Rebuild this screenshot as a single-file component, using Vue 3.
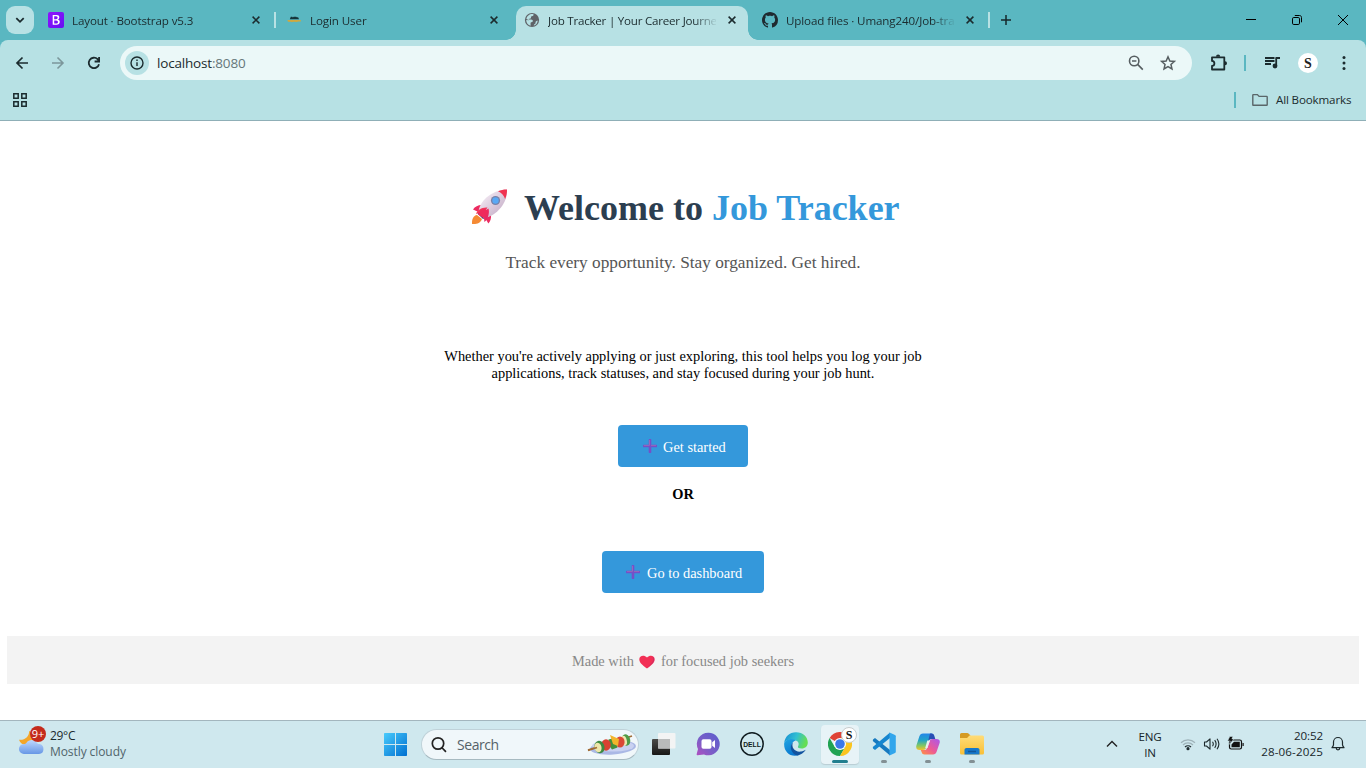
<script setup>
const tabs = [
  { title: 'Layout · Bootstrap v5.3', icon: 'bootstrap', ls: '-0.13px' },
  { title: 'Login User', icon: 'login', ls: '-0.1px' },
  { title: 'Job Tracker | Your Career Journe', icon: 'globe', active: true, ls: '-0.23px' },
  { title: 'Upload files · Umang240/Job-tra', icon: 'github', ls: '-0.12px' },
]
</script>

<template>
  <div class="screen">
    <div class="strip">
      <button class="tab-search">
        <svg width="28" height="28" viewBox="0 0 28 28"><path d="M10.3 12.2 14 15.8l3.7-3.6" fill="none" stroke="#1b2b2e" stroke-width="1.8" /></svg>
      </button>
      <div class="tabs">
        <div v-for="(t, i) in tabs" :key="t.icon" class="tab" :class="{ active: t.active, ruled: i === 0 || i === 3 }">
          <div class="tab-body">
            <svg v-if="t.icon === 'bootstrap'" class="fav" viewBox="0 0 16 16">
              <defs><linearGradient id="bs" x1="0" y1="0" x2="1" y2="1"><stop offset="0" stop-color="#9013fe" /><stop offset="1" stop-color="#6610f2" /></linearGradient></defs>
              <rect width="16" height="16" rx="2" fill="url(#bs)" />
              <path d="M4.700 3h4c1.700 0 2.600.9 2.600 2.300 0 1.100-.6 1.900-1.600 2.200 1.300.1 2.100 1.100 2.100 2.300 0 1.900-1.300 3-3.300 3H4.700zM6.200 7.200H8c2.200 0 2.200-3 .1-3H6.200zm0 4.400h2c2.400 0 2.300-3.200 0-3.200h-2z" fill="#fff" fill-rule="evenodd" />
            </svg>
            <svg v-else-if="t.icon === 'login'" class="fav" viewBox="0 0 16 16">
              <path d="M3.800 7.300 4.800 4.800h1.500l.6.700.7-.7h2.600l.9.700.9-.5 1 2.300z" fill="#15343a" />
              <path d="M1.300 7.900h13.500v1.700h-3.200l-1 .7-1-.5H7l-1 .5-1-.5H2z" fill="#c3ac48" />
              <path d="M2.500 8.900h11" stroke="#e7a52e" stroke-width=".8" stroke-dasharray="1.5 .5" />
            </svg>
            <svg v-else-if="t.icon === 'globe'" class="fav" viewBox="0 0 16 16">
              <circle cx="8" cy="8" r="7.100" fill="#5f6368" />
              <path d="M9.500 2.200c.3 1.300-.5 1.900-1.700 2-.9.100-.9.800-.8 1.500.1.800-.9 1-1.800 1-.6 0-.6.7.2.800 1.400 0 3.100-.2 3.400 1.100.2 1-.3 1.600-1.500 1.700-1 .1-.7 1.300-.7 2.300v1.200C4 13.300 2.200 11 2.200 8l3 .2L2.400 7C2.900 3.800 6 1.600 9.500 2.200zM13.800 8.400c-.2 2.700-1.900 4.600-4.200 5.300.5-.8.6-1.600 1.500-2 .6-.3.500-1.200.4-1.700.6-.9 1.300-1.500 2.300-1.600z" fill="#b7e1e4" />
            </svg>
            <svg v-else class="fav" viewBox="0 0 16 16">
              <path fill="#1f2a30" d="M8 0C3.58 0 0 3.58 0 8c0 3.54 2.29 6.53 5.47 7.59.4.07.55-.17.55-.38 0-.19-.01-.82-.01-1.49-2.01.37-2.53-.49-2.69-.94-.09-.23-.48-.94-.82-1.13-.28-.15-.68-.52-.01-.53.63-.01 1.08.58 1.23.82.72 1.21 1.87.87 2.33.66.07-.52.28-.87.51-1.07-1.78-.2-3.64-.89-3.64-3.95 0-.87.31-1.59.82-2.15-.08-.2-.36-1.02.08-2.12 0 0 .67-.21 2.2.82.64-.18 1.32-.27 2-.27s1.36.09 2 .27c1.53-1.04 2.2-.82 2.2-.82.44 1.1.16 1.92.08 2.12.51.56.82 1.27.82 2.15 0 3.07-1.87 3.75-3.65 3.95.29.25.54.73.54 1.48 0 1.07-.01 1.93-.01 2.2 0 .21.15.46.55.38A8.01 8.01 0 0 0 16 8c0-4.42-3.58-8-8-8z" />
            </svg>
            <span class="tab-title" :style="{ letterSpacing: t.ls }">{{ t.title }}</span>
            <svg class="tab-close" viewBox="0 0 16 16"><path d="m4.600 4.600 6.800 6.800m0-6.800-6.800 6.800" stroke="#1b2b2e" stroke-width="1.500" /></svg>
          </div>
        </div>
      </div>
      <svg class="new-tab" width="32" height="40" viewBox="0 0 32 40"><path d="M11 20h10M16 15v10" stroke="#16282b" stroke-width="1.500" /></svg>
      <div class="controls">
        <svg viewBox="0 0 46 40"><path d="M18 19.5h10" stroke="#000" /></svg>
        <svg viewBox="0 0 46 40" fill="none" stroke="#000"><rect x="18.5" y="17.5" width="7" height="7" rx="1.3" /><path d="M20.8 15.5h4.700c1.200 0 2 .8 2 2v4.800" /></svg>
        <svg viewBox="0 0 46 40"><path d="m18 15 10 10m0-10L18 25" stroke="#000" stroke-width="1" /></svg>
      </div>
    </div>

    <div class="chrome">
      <div class="toolbar">
        <svg class="nav" viewBox="0 0 36 46" fill="none" stroke="#1b2b2e" stroke-width="1.7"><path d="M24 23H13m5.500-5.500L13 23l5.500 5.500" /></svg>
        <svg class="nav" viewBox="0 0 36 46" fill="none" stroke="#7c979b" stroke-width="1.6"><path d="M12 23h11m-5.500-5.500L23 23l-5.500 5.500" /></svg>
        <svg class="nav" viewBox="0 0 36 46" fill="none" stroke="#1b2b2e" stroke-width="1.8"><path d="M23 24.200a5.200 5.200 0 1 1-1.400-5l1.700 1.900M23.100 17v4.500h-4.500" /></svg>
        <div class="omnibox">
          <span class="info"><svg width="24" height="24" viewBox="0 0 24 24" fill="none" stroke="#1b2b2e" stroke-width="1.4"><circle cx="12" cy="12" r="6" /><path d="M12 11.200V15M12 8.600v1.400" /></svg></span>
          <span class="url">localhost<i>:8080</i></span>
          <svg class="omni-icon" viewBox="0 0 32 34" fill="none" stroke="#565e61" stroke-width="1.600"><circle cx="14.200" cy="15" r="4.700" /><path d="m17.600 18.400 5.200 5.200M12 15h4.400" /></svg>
          <svg class="omni-icon" viewBox="0 0 32 34" fill="none" stroke="#565e61" stroke-width="1.500"><path d="m16 10.800 1.850 4.150 4.550.45-3.430 3.020 1 4.480L16 20.600l-3.970 2.300 1-4.480-3.430-3.020 4.550-.45z" /></svg>
        </div>
        <svg class="ext" viewBox="0 0 52 46" fill="none" stroke="#1b2b2e" stroke-width="1.800" stroke-linejoin="round"><path d="M20 17.300h12.300v12.200H20v-3.600c3.200-.3 3.200-4.700 0-5z" /><path d="M24 16.700a2.100 2.100 0 0 1 4.200 0zM33 21.200a2 2 0 0 1 0 4z" fill="#1b2b2e" stroke="none" /></svg>
        <span class="rule"></span>
        <svg class="music" viewBox="0 0 44 46"><path d="M15 18h9.500M15 21h9.500M15 24h6M26.200 18v8M25.500 18h4.500" stroke="#1b2b2e" stroke-width="1.800" /><circle cx="25" cy="26" r="2.400" fill="#1b2b2e" /></svg>
        <span class="avatar">S</span>
        <svg class="dots" viewBox="0 0 36 46" fill="#1b2b2e"><circle cx="18" cy="17.500" r="1.500" /><circle cx="18" cy="23" r="1.500" /><circle cx="18" cy="28.500" r="1.500" /></svg>
      </div>
      <div class="bookmarks">
        <svg width="16" height="16" viewBox="0 0 16 16" fill="none" stroke="#1b2b2e" stroke-width="1.500"><path d="M1.800 1.800h4.400v4.400H1.800zM9.800 1.800h4.400v4.400H9.800zM1.800 9.800h4.400v4.400H1.800zM9.800 9.800h4.400v4.400H9.800z" /></svg>
        <span class="rule bm-rule"></span>
        <svg width="16" height="16" viewBox="0 0 16 16" fill="none" stroke="#5a6669" stroke-width="1.400"><path d="M.8 3.200q0-.6.600-.6h4l1.700 1.800h7.500q.6 0 .6.600v7.700q0 .6-.6.600H1.400q-.6 0-.6-.6z" /></svg>
        <span class="bm-text">All Bookmarks</span>
      </div>
    </div>

    <main class="page">
      <h1>
        <svg class="rocket" viewBox="0 0 38 38">
          <defs>
            <linearGradient id="rk" x1="0" y1="0" x2="1" y2="1"><stop offset=".2" stop-color="#f1e7f1" /><stop offset=".8" stop-color="#c9b3cb" /></linearGradient>
            <linearGradient id="rf" x1="0" y1="0" x2="1" y2="1"><stop offset="0" stop-color="#fb3e55" /><stop offset="1" stop-color="#e02165" /></linearGradient>
          </defs>
          <path d="M7 27c-3.500.7-5.200 3.500-5 9 4.500.4 8.600-.8 10-5z" fill="#f58a34" />
          <path d="M12 17c-3.500-.2-7 1.500-9 4.500l6.500 3zM21 27c.4 3-.6 6.500-2.600 8.500L15 30z" fill="#ec2b60" />
          <path d="M7.500 25.500 13 31l2-1-6.700-6.500z" fill="#433d78" />
          <path d="M8.500 25C8.500 14 21 2 37 1.500 38 14 27 28 14 30z" fill="url(#rk)" />
          <path d="M28 3.200c3-1.200 6-1.800 9-1.700.1 3.200-.5 6.500-1.900 9.500-1-3.300-3.900-6.600-7.100-7.800z" fill="#f03250" />
          <path d="M17.500 19.500c-5.500-.5-10.500 2.500-11.500 6.500 3.500-1.800 8-1 9.500-3.500zM18.500 20.500c1.500 5-1 11-4 13.500-1.200-5-.3-9.500 2.200-12.500z" fill="url(#rf)" />
          <path d="M8 26.500q1-5 6-5.500l3.500 1.500q-.5 5-4 7.500z" fill="#ef2a5b" />
          <circle cx="25.500" cy="12.500" r="4.600" fill="#7780a8" /><circle cx="25.500" cy="12.500" r="3.200" fill="#59a8f5" />
        </svg><span class="hello">Welcome to <b>Job Tracker</b></span>
      </h1>
      <p class="sub">Track every opportunity. Stay organized. Get hired.</p>
      <p class="desc">Whether you're actively applying or just exploring, this tool helps you log your job<br />applications, track statuses, and stay focused during your job hunt.</p>
      <a class="btn start">
        <svg class="plus" viewBox="0 0 14 14"><path d="M7 1v12M1 7h12" stroke="#7550c8" stroke-width="2.600" stroke-linecap="round" /><path d="M6.500 1v5.400H1M13 6.400H8" stroke="#9a6cb8" fill="none" stroke-width=".9" /></svg>
        <span>Get started</span>
      </a>
      <strong class="or">OR</strong>
      <a class="btn dash">
        <svg class="plus" viewBox="0 0 14 14"><path d="M7 1v12M1 7h12" stroke="#7550c8" stroke-width="2.600" stroke-linecap="round" /><path d="M6.500 1v5.400H1M13 6.400H8" stroke="#9a6cb8" fill="none" stroke-width=".9" /></svg>
        <span>Go to dashboard</span>
      </a>
      <footer>
        <span>Made with</span>
        <svg class="heart" viewBox="0 0 16 14"><path d="M8 13.500C3 10 .3 7.500.3 4.300.3.700 5-.8 8 2.600 11-.8 15.700.7 15.700 4.300c0 3.200-2.700 5.700-7.700 9.200z" fill="#f22f55" /><path d="M13.500 2c2 3.500-1 7-5.500 10.300 5-3 7-5.300 7-8.100 0-1-.6-1.800-1.500-2.200z" fill="#ca2c67" /></svg>
        <span>for focused job seekers</span>
      </footer>
    </main>

    <div class="taskbar">
      <div class="weather">
        <svg width="32" height="34" viewBox="0 0 32 34">
          <defs><linearGradient id="cl" x1="0" y1="0" x2="0" y2="1"><stop offset="0" stop-color="#bed8ff" /><stop offset="1" stop-color="#6797e5" /></linearGradient></defs>
          <path d="M13 6c.7 5-4 9.500-10 8.800 1 3.500 4 5.200 8 5.200h8V9z" fill="#f4a62a" />
          <path d="M8 29a5 5 0 0 1-.2-10c1.500 0 2-.3 2.700-1.200 2-3.500 8-3.800 10.200-.3.800 1.200 1.400 1.500 2.600 1.600A5 5 0 0 1 23 29z" fill="url(#cl)" />
          <circle cx="22" cy="9" r="8" fill="#c42b1c" /><text x="22" y="13" text-anchor="middle" font-family="Open Sans, sans-serif" font-size="11" fill="#fff">9+</text>
        </svg>
        <div class="forecast"><span class="deg">29°C</span><span class="cloudy">Mostly cloudy</span></div>
      </div>
      <svg class="start-logo" viewBox="0 0 24 24"><defs><linearGradient id="wn" x1="0" y1="0" x2="1" y2="1"><stop offset="0" stop-color="#48cbfc" /><stop offset="1" stop-color="#006fd0" /></linearGradient></defs><path d="M.8 0H11v11H0V.8Q0 0 .8 0zM12 0h10.200q.8 0 .8.800V11H12zM0 12h11v11H.8q-.8 0-.8-.8zM12 12h11v10.200q0 .8-.8.800H12z" fill="url(#wn)" /></svg>
      <div class="search">
        <svg width="18" height="18" viewBox="0 0 18 18" fill="none" stroke="#222" stroke-width="1.700"><circle cx="8" cy="7.500" r="5.700" /><path d="m12.200 12 3.300 3.400" stroke-linecap="round" /></svg>
        <span>Search</span>
        <svg class="skewer" width="50" height="26" viewBox="0 0 50 26">
          <ellipse cx="26" cy="15.500" rx="23" ry="7" fill="#aab8e5" transform="rotate(-4 26 15.500)" /><ellipse cx="26" cy="14" rx="21" ry="5.600" fill="#c9d1f1" />
          <path d="m1 18 44-14" stroke="#a06b35" stroke-width="1.700" />
          <ellipse cx="39" cy="8" rx="4.200" ry="5.800" fill="#4e9b48" transform="rotate(-15 39 8)" /><ellipse cx="37" cy="8.700" rx="2.800" ry="4.900" fill="#ede7b1" transform="rotate(-15 37 8.700)" />
          <ellipse cx="33" cy="10" rx="4.600" ry="5.500" fill="#da4836" />
          <path d="m21.500 7.500 6-1.500 3 9.500-5.500 2q-4-4-3.500-10z" fill="#448f3c" />
          <path d="m23 3 9 4-1 7-5-2z" fill="#f2b52b" />
          <ellipse cx="19" cy="13" rx="4.800" ry="5.700" fill="#d84232" />
          <ellipse cx="12.500" cy="15" rx="5" ry="6.300" fill="#3d8a41" transform="rotate(-15 12.500 15)" /><ellipse cx="11" cy="15.500" rx="3.500" ry="4.800" fill="#eee6ab" transform="rotate(-15 11 15.500)" />
          <path d="m1 18.500 9-3" stroke="#a06b35" stroke-width="1.600" />
        </svg>
      </div>
      <div class="apps">
        <div class="app"><svg viewBox="0 0 24 24"><defs><linearGradient id="dk" x2="0" y2="1"><stop stop-color="#4b4b49" /><stop offset="1" stop-color="#171716" /></linearGradient></defs><rect x="0" y="7" width="18" height="16" rx="1" fill="url(#dk)" /><rect x="6" y="1" width="17.500" height="15.500" rx="1" fill="#f3f4f4" /><path d="M6 7h12v9.500H6z" fill="#b9bbbb" /></svg></div>
        <div class="app"><svg viewBox="0 0 24 24"><defs><linearGradient id="mt" x1="1" x2="0" y2="1"><stop stop-color="#5a5dcc" /><stop offset=".6" stop-color="#7b5ec8" /><stop offset="1" stop-color="#b14fc0" /></linearGradient></defs><path d="M12.500.700A11.300 11.300 0 1 1 8 22.400L1.500 23.200c-.7.100-1-.5-.8-1.100L2 17A11.300 11.300 0 0 1 12.500.700z" fill="url(#mt)" /><rect x="5.500" y="7.300" width="10" height="9.400" rx="1.800" fill="#fff" /><path d="m16.200 10.200 2.800-2.200v8l-2.800-2.200z" fill="#fff" /></svg></div>
        <div class="app"><svg viewBox="0 0 24 24" fill="none" stroke="#101c20"><circle cx="12" cy="12" r="11.200" stroke-width="1.500" /><text x="3.200" y="14.700" font-family="Liberation Sans, sans-serif" font-weight="700" font-size="7.600" fill="#101c20" stroke="none" textLength="17.600" lengthAdjust="spacingAndGlyphs">DELL</text></svg></div>
        <div class="app"><svg viewBox="0 0 24 24"><defs><linearGradient id="e1" x1="0" y1="0" x2="1" y2=".3"><stop stop-color="#158cd4" /><stop offset=".55" stop-color="#32bfd2" /><stop offset="1" stop-color="#66de54" /></linearGradient><linearGradient id="e2" x2=".5" y2="1"><stop stop-color="#20a5e2" /><stop offset="1" stop-color="#0876ce" /></linearGradient></defs><path d="M.200 11C.8 4.600 5.500.200 12 .200 19 .200 23.800 5 23.800 10.500c0 3.800-2.600 6-6.200 6-2.700 0-4.200-1-3.600-2 1.500-2.800.5-5.500-2.800-6.300C7 7 2 7.500.200 11z" fill="url(#e1)" /><path d="M.200 11C2 7 7 5.800 11.800 8.200 8 9.500 6.800 13 8.300 17c1.200 3.500 4.500 6 7 6-9 3-16-3.500-15.100-12z" fill="url(#e2)" /><path d="M9 10.500c-2.300 5 2.300 10 8 9 2-.3 3.600-1 4.800-1.700-1.700 3-5 5.300-8.500 5.800C7.500 22 4.500 14.500 9 10.500z" fill="#12539f" /></svg></div>
        <div class="app running"><svg viewBox="0 0 24 24" class="over"><path d="M12 12 1.600 6A12 12 0 0 1 22.400 6z" fill="#df4337" /><path d="M12 12 6.800 15 1.600 6A12 12 0 0 0 12 24l5.200-9z" fill="#21a353" /><path d="M12 6h10.400A12 12 0 0 1 12 24l5.200-9z" fill="#fbc51f" /><circle cx="12" cy="12" r="6" fill="#fff" /><circle cx="12" cy="12" r="4.800" fill="#3b78e7" /></svg><span class="profile">S</span><i class="dash-mark wide"></i></div>
        <div class="app"><svg viewBox="0 0 24 24"><path d="M1 7.600 3 6l15 12v5.500L.800 9z" fill="#1679bf" /><path d="M1 16.400 3 18 18 6V.500L.800 15z" fill="#1686cf" /><path d="m17.500.500 5.500 2.600q.8.400.8 1.200v15.400q0 .8-.8 1.200l-5.500 2.600z" fill="#32a6ec" /></svg><i class="dash-mark"></i></div>
        <div class="app"><svg viewBox="0 0 24 24"><defs><linearGradient id="c1" x2="0" y2="1"><stop stop-color="#2386e9" /><stop offset=".4" stop-color="#20a4c8" /><stop offset=".75" stop-color="#87c85e" /><stop offset="1" stop-color="#f6c12d" /></linearGradient><linearGradient id="c2" x1="1" x2="0" y2="1"><stop stop-color="#aa57ed" /><stop offset=".55" stop-color="#ed5a95" /><stop offset="1" stop-color="#ff953f" /></linearGradient></defs><path d="M7 1.500h9.500L13 7.500l-2.800 8c-.6 1.700-1.500 2.500-3.200 2.500H3.500C.8 18-.3 16 .4 13.500L3.300 4.500C4 2.500 5 1.500 7 1.500z" fill="url(#c1)" /><path d="M14 1.500h1.500c1.500 0 2.400.8 2.800 2.200L19.300 7H16c-2 0-2.800.7-3.400 2.400L11 14l2-8.500z" fill="#284eb4" /><path d="M17 22.500H8.500c-1.500 0-2.400-.8-2.800-2.200L4.700 18H8c2 0 2.800-.9 3.400-2.600l2.200-6c.6-1.700 1.500-2.400 3.200-2.400h3.700c2.700 0 3.800 1.500 3.100 4l-2.900 8.500c-.7 2-1.700 3-3.700 3z" fill="url(#c2)" /><path d="M11.300 8.500h2.600l-2.400 7.500H9.200z" fill="#e7f0ed" /></svg><i class="dash-mark"></i></div>
        <div class="app"><svg viewBox="0 0 24 24"><defs><linearGradient id="fd" x2="0" y2="1"><stop stop-color="#ffdc78" /><stop offset="1" stop-color="#f9bf36" /></linearGradient></defs><path d="M0 2.500Q0 1 1.500 1h5.800q.7 0 1.200.5L10.500 3.500l-3 3.500H0z" fill="#d59a23" /><path d="M0 6h7L9.500 3.500h13Q24 3.500 24 5v16q0 1.500-1.500 1.500h-21Q0 22.500 0 21z" fill="url(#fd)" /><path d="M4.500 22.500v-4.700Q4.500 16 6.500 16h11q2 0 2 1.800v4.700z" fill="#1778ca" /><path d="M8 19.500h8" stroke="#115799" stroke-width="1.500" /></svg><i class="dash-mark"></i></div>
      </div>
      <div class="tray">
        <svg class="chev" viewBox="0 0 16 16"><path d="m3 10.500 5-5 5 5" fill="none" stroke="#222" stroke-width="1.400" /></svg>
        <div class="lang"><span>ENG</span><span>IN</span></div>
        <svg class="wifi" viewBox="0 0 16 16" fill="none" stroke="#1d292c" stroke-width="1.200"><path d="M1 6.700a10 10 0 0 1 14 0M3 9a7 7 0 0 1 10 0" stroke="#9fb3b9" /><path d="M5 11a4.300 4.300 0 0 1 6 0" /><circle cx="8" cy="12.700" r="1" fill="#1d292c" /></svg>
        <svg class="sound" viewBox="0 0 18 16" fill="none" stroke="#1d292c" stroke-width="1.100" stroke-linejoin="round"><path d="M1.500 6h2L7 2.800v10.400L3.500 10h-2zM9.500 5.700q1.600 2.300 0 4.600M11.700 4.200q2.800 3.800 0 7.600M14 2.800q3.800 5.200 0 10.400" /></svg>
        <svg class="battery" viewBox="0 0 18 16"><rect x="2.500" y="4" width="12" height="9" rx="1.700" fill="none" stroke="#111" stroke-width="1.200" /><path d="M4.500 8.500 7 5.800h5.800v5.500H4.500zM15.500 7h1.200v3h-1.200z" fill="#111" /><path d="M2.800.5h3L4.900 3h2L2.300 8.500 3.300 5H.6z" fill="#111" stroke="#cfe8ee" stroke-width=".5" /></svg>
        <div class="clock"><span class="time">20:52</span><span>28-06-2025</span></div>
        <svg class="bell" viewBox="0 0 16 16" fill="none" stroke="#1d292c" stroke-width="1.200" stroke-linejoin="round"><path d="M2 11.700q1.500-2 1.500-3V6a4.500 4.500 0 0 1 9 0v2.700q0 1 1.500 3zM6.200 12a1.800 1.800 0 0 0 3.600 0" /></svg>
      </div>
    </div>
  </div>
</template>

<style scoped>
.screen { width: 1366px; height: 768px; display: flex; flex-direction: column; background: #fff; overflow: hidden; font-family: 'Open Sans', sans-serif; color: #1b2b2e; }
.screen * { box-sizing: border-box; }
svg { display: block; flex: none; }
span { white-space: nowrap; }

.strip { height: 40px; flex: none; display: flex; background: #5ab7c1; }
.tab-search { width: 28px; height: 28px; margin: 6px 4px 0 6px; padding: 0; border: 0; border-radius: 9px; background: #b7e1e4; }
.tabs { display: flex; }
.tab { width: 238px; height: 40px; padding: 0 4px 0 2px; position: relative; }
.ruled::after { content: ''; position: absolute; right: 0; top: 12px; width: 2px; height: 16px; background: #b7e1e4; }
.tab-body { height: 28px; margin-top: 6px; padding: 0 8px; display: flex; align-items: center; }
.active .tab-body { height: 34px; padding-bottom: 6px; background: #b7e1e4; border-radius: 10px 10px 0 0; }
.active::before, .active::after { content: ''; position: absolute; bottom: 0; width: 10px; height: 10px; }
.active::before { left: -8px; background: radial-gradient(circle at 0 0, #5ab7c1 9.500px, #b7e1e4 10px); }
.active::after { right: -6px; background: radial-gradient(circle at 100% 0, #5ab7c1 9.500px, #b7e1e4 10px); }
.fav { width: 16px; height: 16px; }
.tab-title { margin-left: 8px; padding-top: 1px; width: 168px; font-size: 11.600px; line-height: 18px; mask-image: linear-gradient(90deg, #000 146px, transparent 170px); }
.tab-close { width: 16px; height: 16px; margin-left: 8px; }
.controls { margin-left: auto; display: flex; }
.controls svg { width: 46px; height: 40px; }

.chrome { height: 81px; flex: none; background: linear-gradient(#5ab7c1 12px, #b7e1e4 12px); border-bottom: 1px solid #8fafb7; }
.toolbar { height: 46px; display: flex; align-items: center; background: #b7e1e4; border-radius: 8px 8px 0 0; padding-left: 4px; }
.nav { width: 36px; height: 46px; }
.omnibox { margin-left: 8px; width: 1072px; height: 34px; border-radius: 17px; background: #ebf8f8; display: flex; align-items: center; padding: 0 8px 0 5px; }
.info { width: 24px; height: 24px; border-radius: 50%; background: #b7e1e4; }
.url { margin-left: 8px; flex: 1; font-size: 13.500px; letter-spacing: -0.180px; line-height: 20px; }
.url i { font-style: normal; color: #66777a; }
.omni-icon { width: 32px; height: 34px; }
.ext { width: 52px; height: 46px; }
.rule { width: 2px; height: 16px; background: #5ab7c1; }
.music { width: 44px; height: 46px; margin-left: 4px; }
.avatar { width: 20px; height: 20px; margin-left: 4px; border-radius: 50%; background: #fff; text-align: center; font: 700 14px/21px 'Liberation Serif', serif; color: #222; }
.dots { width: 36px; height: 46px; margin-left: 8px; }
.bookmarks { height: 28px; display: flex; align-items: center; padding-left: 12px; }
.bm-rule { margin: 0 16px 0 auto; }
.bm-text { width: 75px; margin: 0 15px 0 8px; font-size: 11.600px; letter-spacing: -0.150px; line-height: 18px; }

.page { height: 599px; flex: none; display: flex; flex-direction: column; align-items: center; font-family: 'Liberation Serif', serif; font-size: 14.400px; color: #000; }
h1 { height: 42px; margin: 66px 0 0; width: 428px; display: flex; font-size: 36px; line-height: 42px; color: #2c3e50; }
h1 b { color: #3498db; }
.rocket { width: 38px; height: 38px; margin: 1px 16px 0 1px; }
.sub { margin: 24px 0 0; font-size: 17.280px; line-height: 20px; color: #555; white-space: nowrap; }
.desc { margin: 75px 0 0; text-align: center; line-height: 17px; white-space: nowrap; }
.btn { height: 42px; border-radius: 4px; background: #3498db; color: #fff; display: flex; align-items: center; padding-left: 25px; line-height: 16px; }
.start { width: 130px; margin-top: 43px; }
.dash { width: 162px; margin-top: 48px; padding-left: 24px; }
.plus { width: 14px; height: 14px; margin-right: 6px; }
.dash .plus { margin-right: 7px; }
.btn span { padding-top: 2px; }
.or { margin-top: 19px; line-height: 17px; }
footer { width: 1352px; height: 48px; margin-top: 43px; display: flex; align-items: center; justify-content: center; background: #f3f3f3; color: #888; padding-top: 3px; }
.heart { width: 16px; height: 14px; margin: 0 6px 0 5px; }

.taskbar { height: 48px; flex: none; display: flex; background: #cfe8ee; border-top: 1px solid #a3b6be; }
.weather { width: 384px; display: flex; padding: 4px 0 0 16px; }
.forecast { display: flex; flex-direction: column; margin: 3px 0 0 2px; font-size: 12px; line-height: 16px; }
.deg { letter-spacing: -0.300px; }
.cloudy { color: #51646b; letter-spacing: -0.080px; }
.start-logo { width: 24px; height: 24px; margin-top: 12px; }
.search { width: 218px; height: 31px; margin: 8px 0 0 13px; border-radius: 16px; background: #f0f7fa; border: 1px solid #bfd2d9; border-bottom-color: #a7bac1; display: flex; align-items: center; padding-left: 8px; font-size: 14px; color: #556268; }
.search span { margin-left: 9px; letter-spacing: -0.450px; }
.skewer { margin: 0 1px 0 auto; }
.apps { display: flex; margin-left: 3px; }
.app { width: 44px; height: 47px; position: relative; display: flex; justify-content: center; padding-top: 11px; }
.app svg { width: 24px; height: 24px; }
.running::before { content: ''; position: absolute; left: 3px; top: 4px; width: 38px; height: 39px; border-radius: 4px; background: #e7f3f7; box-shadow: 0 1px 1px #b9cdd3; }
.over { position: relative; }
.profile { position: absolute; left: 23px; top: 6px; width: 16px; height: 16px; border-radius: 50%; border: 1px solid #c7cccd; background: #fff; text-align: center; font: 700 12px/14px 'Liberation Serif', serif; color: #111; }
.dash-mark { position: absolute; bottom: 5px; left: 19px; width: 6px; height: 3px; border-radius: 2px; background: #839094; }
.dash-mark.wide { left: 14px; width: 16px; background: #227f8f; }
.tray { margin-left: auto; display: flex; font-size: 11.600px; line-height: 16px; color: #17262a; }
.tray > svg { height: 16px; margin-top: 15px; }
.chev { width: 16px; }
.lang { width: 40px; margin: 8px 0 0 10px; display: flex; flex-direction: column; align-items: center; letter-spacing: -0.150px; }
.wifi { width: 16px; margin-left: 10px; }
.sound { width: 18px; margin-left: 7px; }
.battery { width: 18px; margin-left: 6px; }
.clock { width: 78px; margin: 7px 0 0 0; display: flex; flex-direction: column; align-items: flex-end; letter-spacing: 0.130px; }
.time { letter-spacing: -0.100px; }
.bell { width: 16px; margin: 0 20px 0 7px; }
</style>

<style>
html, body { margin: 0; overflow: hidden; background: #fff; }
</style>
